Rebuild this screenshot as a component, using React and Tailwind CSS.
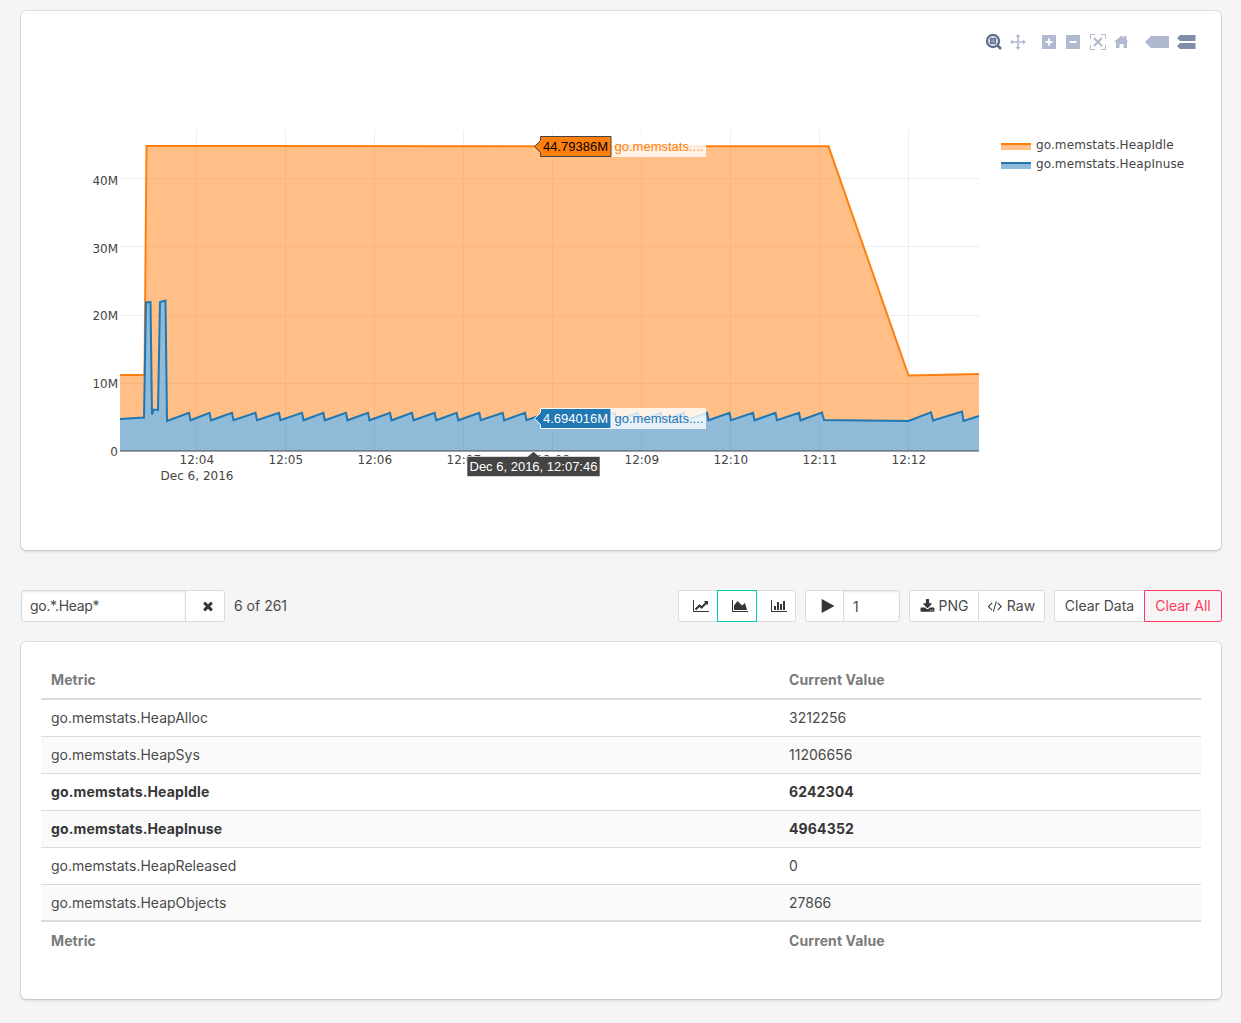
const SANS = 'font-["Inter",sans-serif]'

const rows = [
  ['go.memstats.HeapAlloc', '3212256', false],
  ['go.memstats.HeapSys', '11206656', false],
  ['go.memstats.HeapIdle', '6242304', true],
  ['go.memstats.HeapInuse', '4964352', true],
  ['go.memstats.HeapReleased', '0', false],
  ['go.memstats.HeapObjects', '27866', false],
]

const peaks = [189, 209.5, 232, 255.5, 279, 302, 323.3, 346, 368, 390, 412, 434.7, 456.7, 479.3, 502.7, 525, 548, 570, 593, 615, 638, 661, 684, 707, 729.5, 753, 775.5, 799]

// blue series, in page pixels
const blue = [
  [120, 419], [144, 417.5], [146, 302.5], [150.5, 302], [152, 414.5], [153.5, 409.5], [158, 410], [160, 302], [165.5, 300.5], [167, 421],
  ...peaks.flatMap(x => [[x, 412.8], [x + 1.5, 420.3]]),
  [822, 412.5], [824, 420], [908.5, 421], [931, 412.3], [933, 420.5], [962, 411.5], [963.5, 421], [979, 416],
]
const orange = [[120, 375], [144.5, 375], [146.5, 146], [828.5, 146.3], [908.5, 375.5], [979, 374]]

const pts = list => list.map(p => p.join(',')).join(' ')
const xTicks = ['12:04', '12:05', '12:06', '12:07', '12:08', '12:09', '12:10', '12:11', '12:12']

// Font Awesome 4 glyphs, the icon packages only carry the newer heavier ones
const glyphs = {
  line: ['0 0 2048 1792', 'M2048 1536v128h-2048v-1536h128v1408h1920zm-128-1248v435q0 21-19.500 29.500t-35.500-7.500l-121-121-633 633q-10 10-23 10t-23-10l-233-233-416 416-192-192 585-585q10-10 23-10t23 10l233 233 464-464-121-121q-16-16-7.500-35.500t29.500-19.500h435q14 0 23 9t9 23z'],
  area: ['0 0 2048 1792', 'M2048 1536v128h-2048v-1536h128v1408h1920zm-384-1024l256 896h-1664v-576l448-576 576 576z'],
  bar: ['0 0 2048 1792', 'M640 896v512h-256v-512h256zm384-512v1024h-256v-1024h256zm1024 1152v128h-2048v-1536h128v1408h1920zm-640-896v768h-256v-768h256zm384-384v1152h-256v-1152h256z'],
  times: ['0 0 1792 1792', 'M1490 1322q0 40-28 68l-136 136q-28 28-68 28t-68-28l-294-294-294 294q-28 28-68 28t-68-28l-136-136q-28-28-28-68t28-68l294-294-294-294q-28-28-28-68t28-68l136-136q28-28 68-28t68 28l294 294 294-294q28-28 68-28t68 28l136 136q28 28 28 68t-28 68l-294 294 294 294q28 28 28 68z'],
  play: ['0 0 1792 1792', 'M1576 927l-1328 738q-23 13-39.500 3t-16.500-36v-1472q0-26 16.500-36t39.500 3l1328 738q23 13 23 31t-23 31z'],
  download: ['0 0 1792 1792', 'M1344 1344q0-26-19-45t-45-19-45 19-19 45 19 45 45 19 45-19 19-45zm256 0q0-26-19-45t-45-19-45 19-19 45 19 45 45 19 45-19 19-45zm128-224v320q0 40-28 68t-68 28h-1472q-40 0-68-28t-28-68v-320q0-40 28-68t68-28h465l135 136q58 56 136 56t136-56l136-136h464q40 0 68 28t28 68zm-325-569q17 41-14 70l-448 448q-18 19-45 19t-45-19l-448-448q-31-29-14-70 17-39 59-39h256v-448q0-26 19-45t45-19h256q26 0 45 19t19 45v448h256q42 0 59 39z'],
  code: ['0 0 1830 1792', 'M553 1399l-50 50q-10 10-23 10t-23-10l-466-466q-10-10-10-23t10-23l466-466q10-10 23-10t23 10l50 50q10 10 10 23t-10 23l-393 393 393 393q10 10 10 23t-10 23zm591-1067l-373 1291q-4 13-15.500 19.500t-23.500 2.500l-62-17q-13-4-19.500-15.500t-2.500-24.500l373-1291q4-13 15.500-19.500t23.500-2.500l62 17q13 4 19.500 15.500t2.500 24.500zm657 651l-466 466q-10 10-23 10t-23-10l-50-50q-10-10-10-23t10-23l393-393-393-393q-10-10-10-23t10-23l50-50q10-10 23-10t23 10l466 466q10 10 10 23t-10 23z'],
}

function Glyph({ name, className }) {
  const [box, d] = glyphs[name]
  return <svg viewBox={box} className={`shrink-0 fill-[#363636] ${className}`}><path d={d} /></svg>
}

function Chart() {
  return (
    <svg viewBox="21 11 1200 539" className="block w-full h-[539px]" fontFamily="'DejaVu Sans', Verdana, sans-serif" fontSize="12">
      {/* grid */}
      {xTicks.map((t, i) => <line key={t} x1={196.5 + 89 * i} x2={196.5 + 89 * i} y1="130" y2="451" stroke="#eeeeee" />)}
      {[383.5, 315.5, 246.5, 178.5].map(y => <line key={y} x1="120" x2="979" y1={y} y2={y} stroke="#eeeeee" />)}

      {/* areas */}
      <polygon points={pts([...orange, ...[...blue].reverse()])} fill="#ff7f0e" fillOpacity="0.5" />
      <polygon points={pts([...blue, [979, 451], [120, 451]])} fill="#1f77b4" fillOpacity="0.5" />
      <polyline points={pts(orange)} fill="none" stroke="#ff7f0e" strokeWidth="2" />
      <polyline points={pts(blue)} fill="none" stroke="#1f77b4" strokeWidth="2" />
      <line x1="120" x2="979" y1="451" y2="451" stroke="#444444" />

      {/* axes */}
      <g fill="#444444" textAnchor="end">
        <text x="118" y="456">0</text>
        <text x="118" y="388">10M</text>
        <text x="118" y="319.500">20M</text>
        <text x="118" y="253">30M</text>
        <text x="118" y="184.500">40M</text>
      </g>
      <g fill="#444444" textAnchor="middle">
        {xTicks.map((t, i) => <text key={t} x={196.8 + 89 * i} y="464">{t}</text>)}
        <text x="197" y="480">Dec 6, 2016</text>
      </g>

      {/* legend */}
      <rect x="1001" y="144" width="30" height="6" fill="#ff7f0e" fillOpacity="0.5" />
      <line x1="1001" x2="1031" y1="144" y2="144" stroke="#ff7f0e" strokeWidth="2" />
      <rect x="1001" y="163" width="30" height="6" fill="#1f77b4" fillOpacity="0.5" />
      <line x1="1001" x2="1031" y1="163" y2="163" stroke="#1f77b4" strokeWidth="2" />
      <text x="1036" y="149" fill="#444444" letterSpacing="0.1">go.memstats.HeapIdle</text>
      <text x="1036" y="168" fill="#444444" letterSpacing="0.1">go.memstats.HeapInuse</text>

      {/* hover labels */}
      <g fontFamily="'Liberation Sans', Arial, sans-serif" fontSize="13">
        <rect x="611" y="137" width="95" height="20" fill="#ffffff" fillOpacity="0.8" />
        <text x="614.500" y="151" fill="#ff7f0e">go.memstats....</text>
        <polygon points="534.5,146.5 540.5,140.5 540.5,136.5 611,136.5 611,156.5 540.5,156.5 540.5,152.5" fill="#ff7f0e" stroke="#444444" />
        <text x="543" y="151" fill="#000000">44.79386M</text>

        <rect x="611" y="408" width="95" height="21" fill="#ffffff" fillOpacity="0.8" />
        <text x="614.500" y="423" fill="#1f77b4">go.memstats....</text>
        <polygon points="534.5,418.5 540.5,412.5 540.5,408.5 611,408.5 611,428.5 540.5,428.5 540.5,424.5" fill="#1f77b4" stroke="#ffffff" />
        <text x="543" y="423" fill="#ffffff">4.694016M</text>

        <polygon points="533.5,451.5 527.5,456.5 467,456.5 467,476.5 600,476.5 600,456.5 539.5,456.5" fill="#444444" stroke="#ffffff" strokeOpacity="0.6" />
        <text x="469.500" y="471" fill="#ffffff">Dec 6, 2016, 12:07:46</text>
      </g>

      {/* modebar */}
      <g fill="#b0b9cf">
        <g fill="none" stroke="#5f6f8c">
          <circle cx="993" cy="41" r="6" strokeWidth="2.4" />
          <rect x="990.5" y="38.5" width="5" height="5" strokeWidth="1.4" fill="#8f9db5" />
          <line x1="997.5" y1="45.5" x2="1001" y2="49" strokeWidth="2.6" />
        </g>
        <path d="M1018 34l2.500 3h-1.700v4.200h4.200v-1.700l3 2.500-3 2.500v-1.700h-4.200v4.200h1.700l-2.500 3-2.500-3h1.700v-4.200h-4.200v1.700l-3-2.500 3-2.500v1.700h4.200v-4.200h-1.700z" />
        <path fillRule="evenodd" d="M1042 35h14v14h-14zM1048 38.500v2.500h-2.500v2h2.500v2.500h2v-2.500h2.500v-2h-2.500v-2.500z" />
        <path fillRule="evenodd" d="M1066 35h14v14h-14zM1069.500 41v2h7v-2z" />
        <g fill="none" stroke="#b0b9cf">
          <path d="M1090.500 39v-4.500h4.500M1101 34.500h4.500v4.500M1105.500 45v4.500h-4.500M1095 49.500h-4.500v-4.500" />
          <path d="M1094 38l8 8M1102 38l-8 8" strokeWidth="2" />
        </g>
        <path d="M1121.500 35.500l2.500 2.200v-1.700h2.500v3.900l2.500 2.100h-2v6h-3.500v-4h-4v4h-3.500v-6h-2z" />
        <path d="M1145 42l6-6h18v12h-18z" />
        <path fill="#808ca8" d="M1180 35h15.500v6h-15.500l-3-3zM1180 43h15.500v6h-15.500l-3-3z" />
      </g>
    </svg>
  )
}

function Btn({ children, className = '' }) {
  return (
    <button className={`h-8 flex items-center justify-center bg-white border border-[#dbdbdb] text-[14px] text-[#4a4a4a] ${className}`}>
      {children}
    </button>
  )
}

function Label({ children }) {
  return <span className="mb-[2px]">{children}</span>
}

function Toolbar() {
  return (
    <div className="flex items-center h-8 mt-[40px] ml-[21px] w-[1201px]">
      <input
        readOnly
        value="go.*.Heap*"
        className="h-8 w-[165px] px-2 pb-[2px] bg-white border border-[#dbdbdb] rounded-l-[3px] text-[14px] tracking-[-0.3px] text-[#4a4a4a] outline-none shadow-[inset_0_1px_2px_rgba(10,10,10,0.1)]"
      />
      <Btn className="w-[40px] -ml-px pl-[5px] rounded-r-[3px]"><Glyph name="times" className="w-[14px] h-[14px]" /></Btn>
      <span className="ml-[9px] mb-[2px] text-[14px] text-[#4a4a4a]">6 of 261</span>

      <div className="ml-auto flex">
        <Btn className="w-[40px] pl-[6px] rounded-l-[3px]"><Glyph name="line" className="w-4 h-[14px]" /></Btn>
        <Btn className="w-[40px] -ml-px pl-[6px] !border-[#00d1b2] relative"><Glyph name="area" className="w-4 h-[14px]" /></Btn>
        <Btn className="w-[40px] -ml-px pl-[6px] rounded-r-[3px]"><Glyph name="bar" className="w-4 h-[14px]" /></Btn>
      </div>
      <div className="ml-[9px] flex">
        <Btn className="w-[39px] pl-[6px] rounded-l-[3px]"><Glyph name="play" className="w-4 h-4" /></Btn>
        <input
          readOnly
          value="1"
          className="h-8 w-[57px] -ml-px pl-[9px] pr-2 bg-white border border-[#dbdbdb] rounded-r-[3px] text-[14px] text-[#4a4a4a] outline-none shadow-[inset_0_1px_2px_rgba(10,10,10,0.1)]"
        />
      </div>
      <div className="ml-[9px] flex">
        <Btn className="w-[70px] gap-[4px] rounded-l-[3px]"><Glyph name="download" className="w-[15px] h-[15px]" /><Label>PNG</Label></Btn>
        <Btn className="w-[67px] -ml-px gap-[5px] rounded-r-[3px]"><Glyph name="code" className="w-[14px] h-[14px]" /><Label>Raw</Label></Btn>
      </div>
      <div className="ml-[9px] flex">
        <Btn className="w-[91px] rounded-l-[3px]"><Label>Clear Data</Label></Btn>
        <Btn className="w-[78px] -ml-px rounded-r-[3px] !bg-[#f5f5f5] !border-[#ff3860] !text-[#ff3860] relative"><Label>Clear All</Label></Btn>
      </div>
    </div>
  )
}

function HeadCells() {
  return (
    <>
      <th className="px-[10px] text-left font-bold tracking-[0.1px]">Metric</th>
      <th className="px-[10px] text-left font-bold tracking-[0.1px]">Current Value</th>
    </>
  )
}

function MetricTable() {
  return (
    <table className="w-full table-fixed border-collapse text-[14px] text-[#4a4a4a]">
      <colgroup><col className="w-[738px]" /><col /></colgroup>
      <thead>
        <tr className="h-[38px] border-b-2 border-[#dbdbdb] text-[#7a7a7a]"><HeadCells /></tr>
      </thead>
      <tbody>
        {rows.map(([name, value, bold], i) => (
          <tr key={name} className={`h-[37px] border-b border-[#dbdbdb] ${i % 2 ? 'bg-[#fafafa]' : ''} ${bold ? 'font-bold text-[#363636] tracking-[0.15px]' : ''}`}>
            <td className="px-[10px]">{name}</td>
            <td className="px-[10px]">{value}</td>
          </tr>
        ))}
      </tbody>
      <tfoot>
        <tr className="h-[38px] border-t-2 border-[#dbdbdb] text-[#7a7a7a]"><HeadCells /></tr>
      </tfoot>
    </table>
  )
}

export default function App() {
  const card = 'ml-[21px] w-[1200px] bg-white rounded-[5px] shadow-[0_2px_3px_rgba(10,10,10,0.1),0_0_0_1px_rgba(10,10,10,0.1)]'

  return (
    <div className={`min-h-[1023px] bg-[#f5f5f5] pt-[11px] ${SANS}`}>
      <div className={card}><Chart /></div>
      <Toolbar />
      <div className={`${card} mt-[20px] h-[357px] px-5 pt-[19px]`}>
        <MetricTable />
      </div>
    </div>
  )
}
